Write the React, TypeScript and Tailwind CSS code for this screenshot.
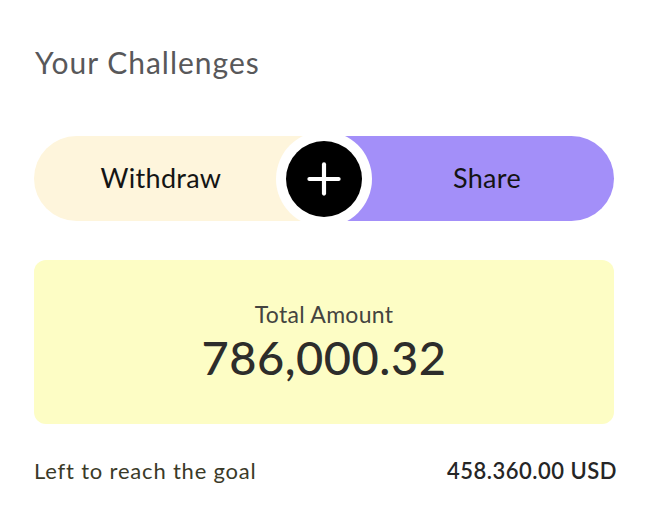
import { Plus } from 'lucide-react';

export default function App() {
  return (
    <div className="w-[648px] h-[524px] bg-white px-[34px] pt-[42px] font-['Lato','Open_Sans',sans-serif]">
      {/* Header */}
      <h1 className="text-[30px] leading-[40px] tracking-[1px] text-[#58585a] pl-px">Your Challenges</h1>

      {/* Action buttons */}
      <div className="relative mt-[54px] flex h-[85px]">
        <button className="flex-1 rounded-l-full bg-[#fef5dc] pr-[36px] text-[27px] tracking-[0.3px] text-[#141414]">
          Withdraw
        </button>
        <button className="flex-1 rounded-r-full bg-[#a38ff9] pl-[36px] text-[27px] tracking-[0.3px] text-[#141414]">
          Share
        </button>
        <div className="absolute left-1/2 top-1/2 flex h-[96px] w-[96px] -translate-x-1/2 -translate-y-1/2 items-center justify-center rounded-full bg-white">
          <div className="flex h-[76px] w-[76px] items-center justify-center rounded-full bg-black">
            <Plus size={50} strokeWidth={2} className="text-white" />
          </div>
        </div>
      </div>

      {/* Total card */}
      <div className="mt-[39px] flex h-[164px] flex-col items-center justify-center rounded-xl bg-[#fdfdc5]">
        <div className="text-[23px] leading-[28px] tracking-[0.3px] text-[#444440]">Total Amount</div>
        <div className="mt-[2px] text-[47px] font-medium leading-[54px] tracking-[0.5px] text-[#2d2d2b]">786,000.32</div>
      </div>

      {/* Goal row */}
      <div className="-mr-[3px] mt-[30px] flex items-center justify-between">
        <span className="text-[22px] tracking-[0.8px] text-[#3a3a28]">Left to reach the goal</span>
        <span className="text-[22px] font-semibold tracking-[0.5px] text-[#262626]">458.360.00 USD</span>
      </div>
    </div>
  );
}
